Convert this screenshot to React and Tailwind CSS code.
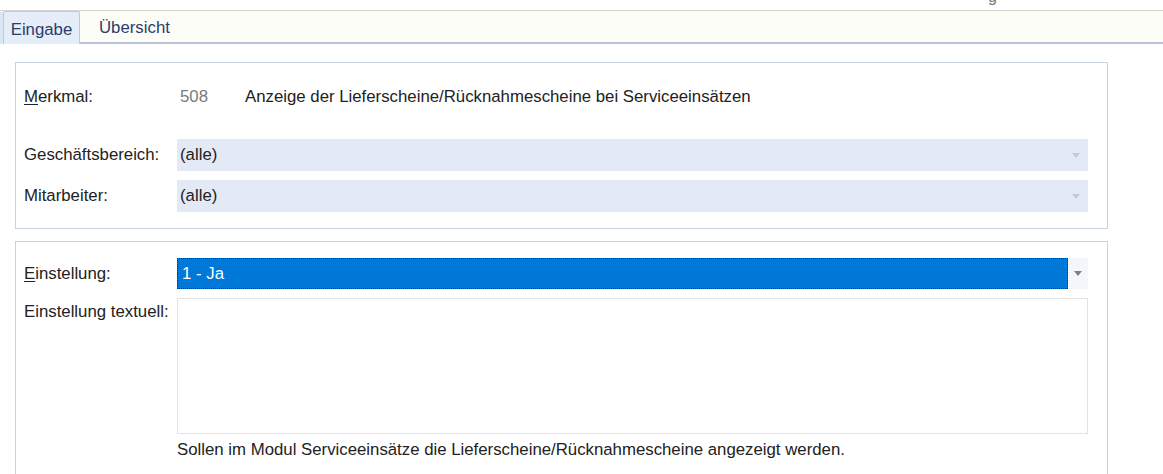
import React from 'react';

const Arrow = ({ color = '#c4c9d4' }) => (
  <svg width="8" height="5" viewBox="0 0 8 5">
    <path d="M0 0 L8 0 L4 5 Z" fill={color} />
  </svg>
);

const ReadOnlySelect = ({ value }) => (
  <div className="flex items-center h-[32px] flex-1 bg-[#e3e9f5] pl-[3px] pr-[8px]">
    <span className="flex-1 text-[#222]">{value}</span>
    <Arrow />
  </div>
);

export default function App() {
  return (
    <div
      className="relative w-full h-[474px] overflow-hidden bg-white text-[16.8px] text-[#222]"
      style={{ fontFamily: '"Liberation Sans", Arial, sans-serif' }}
    >
      {/* cut-off text above the tabs */}
      <div className="h-[10px] overflow-hidden relative">
        <span className="absolute left-[988px] top-[-15px] text-[16px] text-[#777]">g</span>
      </div>

      {/* Tab strip */}
      <div className="border-t border-[#d6d6d6] bg-[#fdfdf8] h-[34px] border-b-2 border-b-[#b9c3dd] flex items-end">
        <div className="w-[3px] h-[32px] bg-[#dbe6f4] mb-[-2px]" />
        <div className="h-[33px] w-[77px] mb-[-2px] pt-[3px] bg-[#e4edf8] border border-b-0 border-[#c3cad6] rounded-t-[2px] flex items-center justify-center text-[#2b3d6b]">
          Eingabe
        </div>
        <div className="h-[32px] pt-[3px] flex items-center pl-[19px] text-[#2b3d6b]">Übersicht</div>
      </div>

      {/* Content */}
      <div className="pt-[18px] pl-[15px] w-[1108px] flex flex-col gap-[12px]">
        {/* Panel 1 */}
        <div className="border border-[#c8d2e0] h-[167px] pl-[8px] pr-[19px] flex flex-col">
          <div className="flex items-center h-[66px] pt-[2px]">
            <span className="w-[153px]">
              <span className="underline underline-offset-2">M</span>erkmal:
            </span>
            <span className="w-[68px] pl-[3px] text-[#7a7a7a]">508</span>
            <span>Anzeige der Lieferscheine/Rücknahmescheine bei Serviceeinsätzen</span>
          </div>
          <div className="flex items-center mt-[10px]">
            <span className="w-[153px]">Geschäftsbereich:</span>
            <ReadOnlySelect value="(alle)" />
          </div>
          <div className="flex items-center mt-[9px]">
            <span className="w-[153px]">Mitarbeiter:</span>
            <ReadOnlySelect value="(alle)" />
          </div>
        </div>

        {/* Panel 2 */}
        <div className="border border-[#c8d2e0] h-[260px] pl-[8px] pr-[19px] pt-[16px] flex flex-col">
          <div className="flex items-center">
            <span className="w-[153px]">
              <span className="underline underline-offset-2">E</span>instellung:
            </span>
            <div className="flex flex-1 h-[31px] bg-[#f3f6fb]">
              <div className="flex-1 flex items-center bg-[#0078d7] border border-dotted border-[#3a2a10] pl-[4px] text-white">
                1 - Ja
              </div>
              <div className="w-[20px] flex items-center justify-center">
                <Arrow color="#7a7f88" />
              </div>
            </div>
          </div>
          <div className="flex mt-[9px]">
            <span className="w-[153px] pt-[1px]">Einstellung textuell:</span>
            <div className="flex-1 h-[136px] border border-[#e3e3e3] bg-white" />
          </div>
          <div className="pl-[153px] mt-[3px]">
            Sollen im Modul Serviceeinsätze die Lieferscheine/Rücknahmescheine angezeigt werden.
          </div>
        </div>
      </div>
    </div>
  );
}
